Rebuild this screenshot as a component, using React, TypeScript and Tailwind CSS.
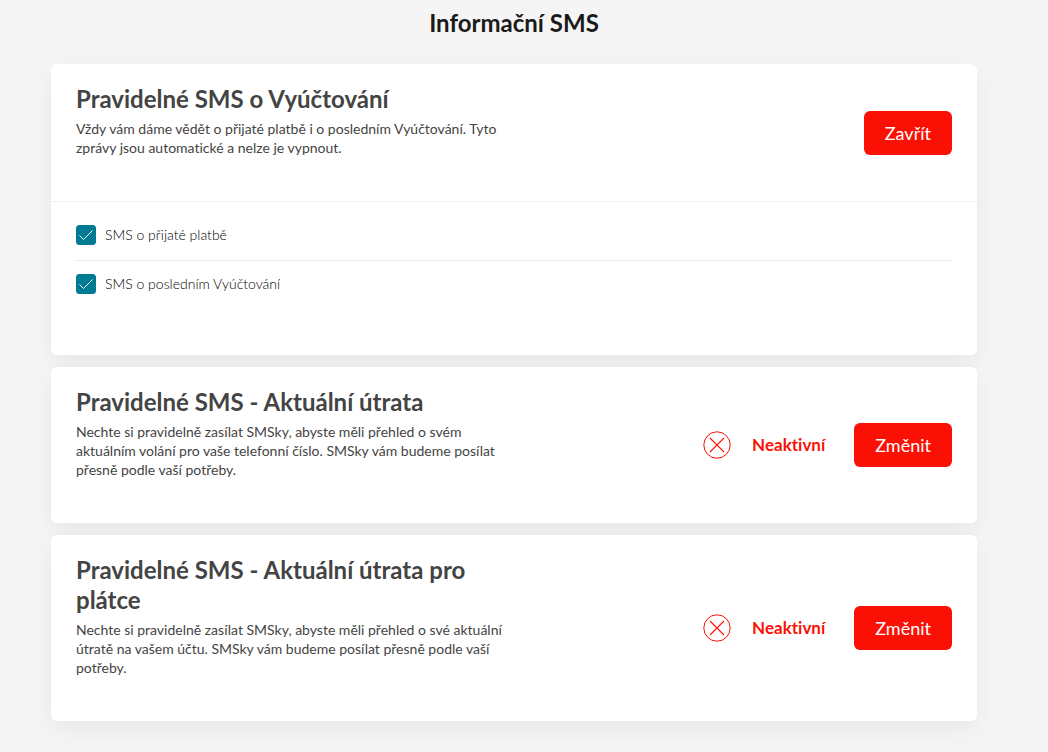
import { useState } from "react";

const INACTIVE_CARDS = [
  {
    id: "usage",
    title: "Pravidelné SMS - Aktuální útrata",
    text: "Nechte si pravidelně zasílat SMSky, abyste měli přehled o svém aktuálním volání pro vaše telefonní číslo. SMSky vám budeme posílat přesně podle vaší potřeby.",
  },
  {
    id: "payer",
    title: "Pravidelné SMS - Aktuální útrata pro plátce",
    text: "Nechte si pravidelně zasílat SMSky, abyste měli přehled o své aktuální útratě na vašem účtu. SMSky vám budeme posílat přesně podle vaší potřeby.",
  },
];

const BILLING_OPTIONS = [
  { id: "sms-payment", label: "SMS o přijaté platbě" },
  { id: "sms-bill", label: "SMS o posledním Vyúčtování" },
];

const CARD = "rounded-md bg-white shadow-[0_8px_24px_rgba(0,0,0,0.06)]";

function CardText({ title, text }: { title: string; text: string }) {
  return (
    <div className="w-[440px] pt-5 pb-11">
      <h2 className="text-[24px] leading-[30px] font-bold text-[#444444]">{title}</h2>
      <p className="mt-[5px] text-[14px] leading-[19px] text-[#444444]">{text}</p>
    </div>
  );
}

function RedButton({ children }: { children: string }) {
  return (
    <button
      type="button"
      className="h-11 rounded-md bg-[#fb1006] px-[21px] text-[18px] leading-6 text-white hover:bg-[#d60b02]"
    >
      {children}
    </button>
  );
}

function InactiveIcon() {
  return (
    <svg width="28" height="28" viewBox="0 0 28 28" fill="none" stroke="#fb1006" aria-hidden="true">
      <circle cx="14" cy="14" r="13.2" strokeWidth="1" />
      <path d="M7 7l14 14M21 7L7 21" strokeWidth="1.1" />
    </svg>
  );
}

function Option({ id, label, last }: { id: string; label: string; last: boolean }) {
  const [checked, setChecked] = useState(true);

  return (
    <li className={last ? "pt-[13px] pb-[15px]" : "border-b border-[#ebebeb] pt-[13px] pb-[15px]"}>
      <label htmlFor={id} className="flex items-center gap-[9px] text-[14px] leading-5 font-light text-black">
        <span className="grid size-5">
          <input
            id={id}
            type="checkbox"
            checked={checked}
            onChange={(e) => setChecked(e.target.checked)}
            className="col-start-1 row-start-1 size-5 appearance-none rounded-[3px] border border-[#007c92] bg-white checked:bg-[#007c92]"
          />
          {checked && (
            <svg
              viewBox="0 0 20 20"
              fill="none"
              stroke="white"
              className="pointer-events-none col-start-1 row-start-1 size-5"
              aria-hidden="true"
            >
              <path d="M3.5 10.5l4 4L16.5 5.5" />
            </svg>
          )}
        </span>
        {label}
      </label>
    </li>
  );
}

export default function App() {
  return (
    <main className="min-h-screen bg-[#f5f5f5] pt-[7px] pr-[71px] pb-[31px] pl-[51px] font-['Lato','Noto_Sans',sans-serif] [font-variant-ligatures:none]">
      <h1 className="text-center text-[24px] leading-8 font-bold text-[#1a1a1a]">Informační SMS</h1>

      <div className="mt-[25px] flex flex-col gap-3">
        <section className={CARD}>
          <div className="flex items-center justify-between border-b border-[#f0f0f0] px-[25px]">
            <CardText
              title="Pravidelné SMS o Vyúčtování"
              text="Vždy vám dáme vědět o přijaté platbě i o posledním Vyúčtování. Tyto zprávy jsou automatické a nelze je vypnout."
            />
            <RedButton>Zavřít</RedButton>
          </div>
          <ul className="px-[25px] pt-[10px] pb-[46px]">
            {BILLING_OPTIONS.map((option, i) => (
              <Option key={option.id} {...option} last={i === BILLING_OPTIONS.length - 1} />
            ))}
          </ul>
        </section>

        {INACTIVE_CARDS.map((card) => (
          <section key={card.id} className={`${CARD} flex items-center justify-between px-[25px]`}>
            <CardText title={card.title} text={card.text} />
            <div className="flex items-center">
              <InactiveIcon />
              <span className="ml-[21px] text-[17px] leading-6 font-bold text-[#fb1006]">Neaktivní</span>
              <span className="ml-[29px] flex">
                <RedButton>Změnit</RedButton>
              </span>
            </div>
          </section>
        ))}
      </div>
    </main>
  );
}
